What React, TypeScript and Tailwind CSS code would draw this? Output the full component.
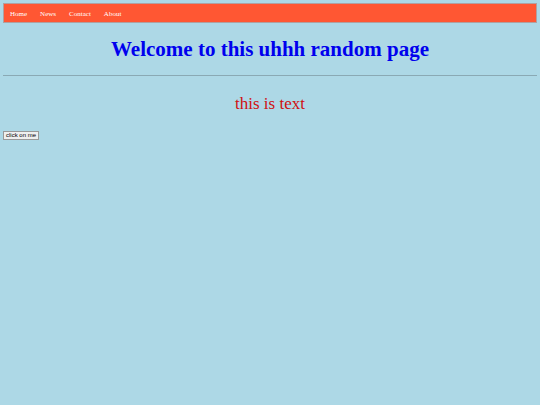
export default function App() {
  return (
    <div className="min-h-[405px] bg-[#add8e6] p-[3px] font-['Liberation_Serif',serif]">
      <nav className="flex h-[20px] items-center gap-[13px] border border-[#b0a0a0] bg-[#ff5733] px-[6px] pt-[2px] text-[7px] text-white">
        <a href="#">Home</a>
        <a href="#">News</a>
        <a href="#">Contact</a>
        <a href="#">About</a>
      </nav>
      <h1 className="mt-[13px] text-center text-[21px] font-bold leading-[26px] text-[#0000ee]">
        Welcome to this uhhh random page
      </h1>
      <hr className="mt-[13px] border-t border-[#8aa9b4]" />
      <p className="mt-[18px] text-center text-[17px] leading-[20px] text-[#d01010]">this is text</p>
      <button className="mt-[17px] block h-[9px] border border-[#999] bg-[#efefef] px-[2px] font-['Liberation_Sans',sans-serif] text-[6px] leading-[7px] text-black">
        click on me
      </button>
    </div>
  )
}
